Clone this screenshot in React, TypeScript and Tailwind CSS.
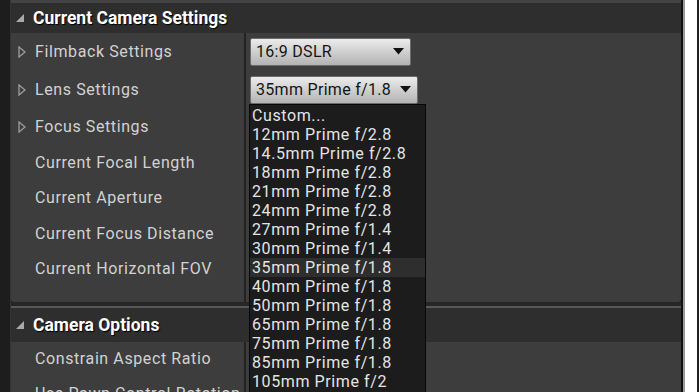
import React from "react";

const lenses = [
  "Custom...",
  "12mm Prime f/2.8",
  "14.5mm Prime f/2.8",
  "18mm Prime f/2.8",
  "21mm Prime f/2.8",
  "24mm Prime f/2.8",
  "27mm Prime f/1.4",
  "30mm Prime f/1.4",
  "35mm Prime f/1.8",
  "40mm Prime f/1.8",
  "50mm Prime f/1.8",
  "65mm Prime f/1.8",
  "75mm Prime f/1.8",
  "85mm Prime f/1.8",
  "105mm Prime f/2",
];

const font = { fontFamily: "Roboto, 'Noto Sans', sans-serif" };

const Expanded = () => (
  <svg width="10" height="10" viewBox="0 0 10 10" className="shrink-0">
    <polygon points="9,1 9,9 1,9" fill="#a9a9a9" />
  </svg>
);

const Collapsed = () => (
  <svg width="8" height="12" viewBox="0 0 8 12" className="shrink-0">
    <polygon points="1,1 7,6 1,11" fill="none" stroke="#9c9c9c" strokeWidth="1.3" />
  </svg>
);

const Caret = () => (
  <svg width="11" height="7" viewBox="0 0 11 7" className="shrink-0">
    <polygon points="0,0 11,0 5.5,6.5" fill="#111" />
  </svg>
);

const Header = ({ title, h }: { title: string; h: string }) => (
  <div className={`flex shrink-0 items-center bg-[#2e2e2e] pl-[4px] ${h}`}>
    <Expanded />
    <span
      className="ml-[8px] text-[17.5px] font-bold text-white"
      style={{ textShadow: "1px 1px 1px #000" }}
    >
      {title}
    </span>
  </div>
);

const Row = ({
  label,
  h,
  arrow,
  children,
}: {
  label: string;
  h: string;
  arrow?: boolean;
  children?: React.ReactNode;
}) => (
  <div className={`flex shrink-0 ${h}`}>
    <div className="flex w-[233px] items-center pl-[7px]">
      <div className="w-[17px]">{arrow ? <Collapsed /> : null}</div>
      <span className="whitespace-nowrap text-[16px] text-[#d2d2d2] tracking-[0.6px]">{label}</span>
    </div>
    <div className="w-[2px] bg-[#222]" />
    <div className="flex flex-1 items-center pl-[4px]">{children}</div>
  </div>
);

const Combo = ({ text, w }: { text: string; w: string }) => (
  <div
    className={`flex h-[28px] items-center justify-between rounded-[2px] border border-[#6b6b6b] bg-gradient-to-b from-[#ececec] to-[#b3b3b3] pl-[5px] pr-[6px] text-[16px] tracking-[0.3px] text-[#151515] ${w}`}
  >
    <span className="whitespace-nowrap">{text}</span>
    <Caret />
  </div>
);

export default function App() {
  return (
    <div className="relative flex h-[392px] w-[699px] overflow-hidden bg-[#1d1d1d]" style={font}>
      <div className="w-[10px] shrink-0" />
      <div className="flex w-[671px] shrink-0 flex-col border-l border-[#333]">
        <div className="h-[3px] shrink-0 bg-[#434343]" />
        <Header title="Current Camera Settings" h="h-[30px]" />
        <div className="flex shrink-0 flex-col rounded-b-[3px] bg-[#3d3d3d]">
          <Row label="Filmback Settings" h="h-[37px]" arrow>
            <Combo text="16:9 DSLR" w="w-[161px]" />
          </Row>
          <Row label="Lens Settings" h="h-[39px]" arrow>
            <Combo text="35mm Prime f/1.8" w="w-[168px]" />
          </Row>
          <Row label="Focus Settings" h="h-[36px]" arrow />
          <Row label="Current Focal Length" h="h-[35px]" />
          <Row label="Current Aperture" h="h-[36px]" />
          <Row label="Current Focus Distance" h="h-[35px]" />
          <Row label="Current Horizontal FOV" h="h-[36px]" />
          <Row label="" h="h-[15px]" />
        </div>
        <div className="h-[4px] shrink-0 bg-[#262626]" />
        <div className="h-[2px] shrink-0 bg-[#585858]" />
        <Header title="Camera Options" h="h-[34px]" />
        <div className="flex shrink-0 flex-col bg-[#3d3d3d]">
          <Row label="Constrain Aspect Ratio" h="h-[34px]" />
          <Row label="Use Pawn Control Rotation" h="h-[36px]" />
        </div>
      </div>
      <div className="w-[2px] shrink-0 bg-[#101010]" />
      <div className="w-[2px] shrink-0 bg-[#9a9a9a]" />
      <div className="w-[12px] shrink-0 bg-white" />
      <div className="w-[2px] shrink-0 bg-[#202020]" />

      <div className="absolute left-[249px] top-[104px] w-[177px] border border-[#080808] bg-[#1c1c1c] pt-[1px] pb-[4px]">
        {lenses.map((l) => (
          <div
            key={l}
            className={`h-[19px] whitespace-nowrap pl-[2px] text-[16px] leading-[19px] tracking-[0.6px] text-[#e4e4e4] ${
              l === "35mm Prime f/1.8" ? "bg-[#2e2e2e]" : ""
            }`}
          >
            {l}
          </div>
        ))}
      </div>
    </div>
  );
}
